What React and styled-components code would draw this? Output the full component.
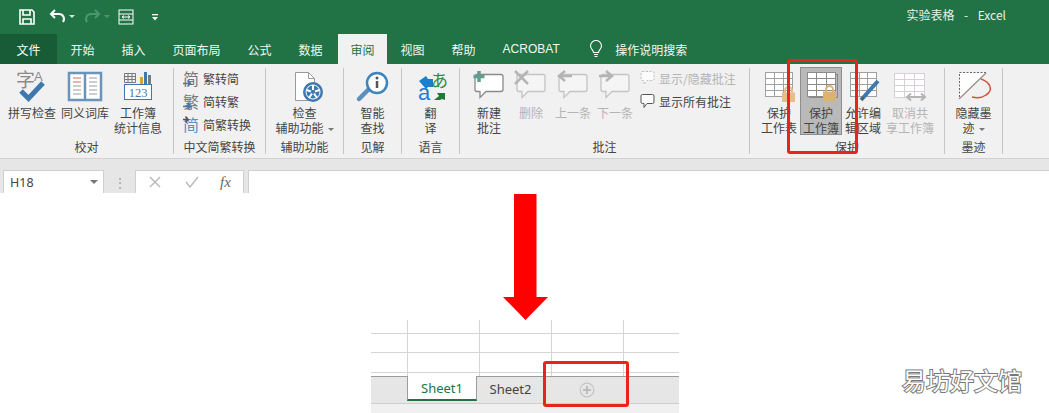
import React from 'react';
import styled, { createGlobalStyle } from 'styled-components';

const GlobalStyle = createGlobalStyle`
  html, body { margin: 0; padding: 0; background: #fff; }
  body { font-family: "Noto Sans CJK SC", "Noto Sans", sans-serif; }
`;

const Page = styled.div`
  position: relative;
  width: 1049px;
  height: 413px;
  overflow: hidden;
  background: #fff;
`;

const TitleBar = styled.div`
  display: flex;
  align-items: center;
  height: 34px;
  background: #217346;
  padding-left: 18px;
  box-sizing: border-box;
`;

const QuickIcons = styled.div`
  display: flex;
  align-items: center;
`;

const Spacer = styled.span`
  flex: none;
  width: ${p => p.$w}px;
`;

const WindowTitle = styled.div`
  display: flex;
  gap: 9.5px;
  margin-left: auto;
  margin-right: 43px;
  margin-top: -5px;
  color: #e6f0ea;
  font-size: 12px;
  white-space: nowrap;
`;

const TabRow = styled.div`
  display: flex;
  align-items: stretch;
  height: 30px;
  background: #217346;
`;

const FileTab = styled.div`
  display: flex;
  align-items: center;
  justify-content: center;
  width: 57px;
  background: #185c37;
  color: #fff;
  font-size: 12px;
`;

const Tab = styled.div`
  display: flex;
  align-items: center;
  padding: 0 13.5px;
  color: ${p => (p.$active ? '#217346' : '#f2f7f4')};
  background: ${p => (p.$active ? '#f1f1f1' : 'transparent')};
  font-size: 12px;
  ${p => p.$active && 'width: 49px; box-sizing: border-box; padding: 0; justify-content: center; margin-left: 2px;'}
`;

const LatinTab = styled(Tab)`
  font-family: "Liberation Sans", sans-serif;
  font-size: 12px;
`;

const SearchTab = styled.div`
  display: flex;
  align-items: center;
  gap: 12px;
  margin-left: 16px;
  color: #f2f7f4;
  font-size: 12px;
`;

const Ribbon = styled.div`
  display: flex;
  height: 95px;
  padding-top: 4px;
  box-sizing: border-box;
  background: #f1f1f1;
  border-bottom: 1px solid #d2d2d2;
`;

const Group = styled.section`
  display: flex;
  flex-direction: column;
  width: ${p => p.$width}px;
  height: 86px;
  box-sizing: border-box;
  border-right: 1px solid #c6c6c6;
`;

const GroupBody = styled.div`
  display: flex;
  justify-content: ${p => (p.$start ? 'flex-start' : 'center')};
  padding-left: ${p => p.$left || 0}px;
  gap: ${p => p.$gap || 0}px;
  height: 71px;
`;

const GroupLabel = styled.div`
  height: 15px;
  line-height: 15px;
  text-align: center;
  font-size: 12px;
  color: #444;
`;

const RibbonButton = styled.div`
  display: flex;
  flex-direction: column;
  align-items: center;
  flex: none;
  width: ${p => p.$width || 42}px;
  height: 68px;
  margin-top: ${p => (p.$selected ? '-1px' : '0')};
  margin-left: ${p => p.$offset || 0}px;
  padding-top: ${p => (p.$selected ? '1px' : '0')};
  box-sizing: border-box;
  font-size: 12px;
  line-height: 15px;
  text-align: center;
  color: ${p => (p.$disabled ? '#b4b4b4' : '#444')};
  background: ${p => (p.$selected ? '#b9b9b9' : 'transparent')};
  box-shadow: ${p => (p.$selected ? 'inset 0 0 0 1px #8e8e8e' : 'none')};
  white-space: nowrap;

  svg { flex: none; display: block; margin-bottom: 0.5px; overflow: visible; }
`;

const Caret = styled.span`
  display: inline-block;
  width: 0;
  height: 0;
  margin-left: 4px;
  vertical-align: 2px;
  border-left: 3px solid transparent;
  border-right: 3px solid transparent;
  border-top: 3px solid #777;
`;

const SmallStack = styled.div`
  display: flex;
  flex-direction: column;
  gap: ${p => p.$gap}px;
  margin-left: ${p => p.$left || 0}px;
`;

const SmallItem = styled.div`
  display: flex;
  align-items: center;
  gap: ${p => p.$gap || 3}px;
  height: 20px;
  font-size: 12px;
  white-space: nowrap;
  color: ${p => (p.$disabled ? '#b4b4b4' : '#444')};
`;

const ConvertGlyph = styled.span`
  position: relative;
  display: block;
  flex: none;
  width: 17px;
  height: 20px;
  font-size: 16px;
  line-height: 20px;
  color: ${p => p.$color};

  svg { position: absolute; left: 0; top: 0; }
`;

const FormulaBar = styled.div`
  display: flex;
  align-items: flex-end;
  height: 34px;
  background: #e6e6e6;
`;

const NameBox = styled.div`
  display: flex;
  align-items: center;
  justify-content: space-between;
  width: 101px;
  height: 23px;
  margin-left: 3px;
  padding: 0 5px 0 6px;
  box-sizing: border-box;
  background: #fff;
  border: 1px solid #cfcfcf;
  border-bottom: none;
  font-family: "Noto Sans", sans-serif;
  font-size: 12.5px;
  color: #444;
`;

const NameCaret = styled.span`
  width: 0;
  height: 0;
  border-left: 4px solid transparent;
  border-right: 4px solid transparent;
  border-top: 4px solid #777;
`;

const BarDots = styled.div`
  display: flex;
  align-items: center;
  justify-content: center;
  width: 31px;
  height: 23px;
  color: #a0a0a0;
  font-size: 12px;
  line-height: 1;
`;

const FormulaButtons = styled.div`
  display: flex;
  align-items: center;
  width: 109px;
  height: 23px;
  padding-left: 13px;
  gap: 24px;
  box-sizing: border-box;
  background: #fff;
  border: 1px solid #cfcfcf;
  border-bottom: none;
`;

const FxLabel = styled.span`
  font-family: "Liberation Serif", serif;
  font-style: italic;
  font-size: 15px;
  color: #666;
  margin-left: -3px;
`;

const FormulaInput = styled.div`
  flex: 1;
  height: 23px;
  margin-left: 4px;
  box-sizing: border-box;
  background: #fff;
  border: 1px solid #cfcfcf;
  border-bottom: none;
  border-right: none;
`;

const Canvas = styled.div`
  display: flex;
  flex-direction: column;
`;

const BigArrow = styled.svg`
  display: block;
  margin: 1px 0 0 503px;
`;

const SheetClip = styled.div`
  display: flex;
  flex-direction: column;
  width: 308px;
  margin-left: 371px;
  background: #fff;
`;

const CellGrid = styled.div`
  display: grid;
  grid-template-columns: 37px 72px 72px 72px 55px;
  grid-template-rows: 14px 19px 20px 3px;
`;

const Cell = styled.div`
  box-sizing: border-box;
  border-right: ${p => (p.$lastCol ? 'none' : '1px solid #d4d4d4')};
  border-bottom: ${p => (p.$lastRow ? 'none' : '1px solid #d4d4d4')};
`;

const SheetBar = styled.div`
  display: flex;
  align-items: flex-start;
  height: 28px;
  padding-left: 36px;
  box-sizing: border-box;
  background: #e6e6e6;
  border-top: 1px solid #9c9c9c;
  border-bottom: 1px solid #cfcfcf;
  font-family: "Noto Sans", sans-serif;
  font-size: 13px;
`;

const SheetTab = styled.div`
  display: flex;
  align-items: center;
  justify-content: center;
  box-sizing: border-box;
  width: ${p => (p.$active ? 70 : 67)}px;
  height: 25px;
  margin-top: -1px;
  color: ${p => (p.$active ? '#217346' : '#444')};
  background: ${p => (p.$active ? '#fff' : 'transparent')};
  border-left: ${p => (p.$active ? '1px solid #9c9c9c' : 'none')};
  border-right: ${p => (p.$active ? '1px solid #9c9c9c' : 'none')};
  border-bottom: ${p => (p.$active ? '2px solid #217346' : 'none')};
`;

const AddSheet = styled.svg`
  margin: 5px 0 0 35px;
`;

const SheetFoot = styled.div`
  height: 9px;
  background: #f0f0f0;
`;

const RedBox = styled.div`
  position: absolute;
  left: ${p => p.$x}px;
  top: ${p => p.$y}px;
  width: ${p => p.$w}px;
  height: ${p => p.$h}px;
  box-sizing: border-box;
  border: 3px solid #e8241c;
  border-radius: 3px;
`;

const Watermark = styled.div`
  position: absolute;
  left: 902px;
  top: 362px;
  font-size: 24px;
  line-height: 36px;
  color: #fff;
  -webkit-text-stroke: 2px #777;
  paint-order: stroke fill;
  white-space: nowrap;
`;

const UndoSvg = styled.svg`
  display: block;
  transform: ${p => (p.$flip ? 'scaleX(-1)' : 'none')};
`;

const BLUE = '#3f78ad';

const SaveIcon = () => (
  <svg width="18" height="18" viewBox="0 0 18 18" fill="none" stroke="#fff" strokeWidth="1.6">
    <path d="M2 2h12l2 2v12H2z" />
    <path d="M5 2v5h7V2M5 16v-5h8v5" />
  </svg>
);

const UndoIcon = ({ color, flip }) => (
  <UndoSvg $flip={flip} width="18" height="16" viewBox="0 0 18 16" fill="none" stroke={color} strokeWidth="2">
    <path d="M6 1 2 5l4 4" />
    <path d="M2 5h8a5 5 0 0 1 4 8" />
  </UndoSvg>
);

const TinyCaret = ({ color }) => (
  <svg width="6" height="4" viewBox="0 0 6 4"><path d="M0 0h6L3 3z" fill={color} /></svg>
);

const FormIcon = () => (
  <svg width="16" height="16" viewBox="0 0 16 16" fill="none" stroke="#fff" strokeWidth="1">
    <rect x="1" y="1" width="14" height="14" />
    <path d="M1 5h14M1 11h14M5 8h6M4 8l2-1.500M4 8l2 1.500M12 8l-2-1.500M12 8l-2 1.500" />
  </svg>
);

const CustomizeIcon = () => (
  <svg width="6" height="7" viewBox="0 0 6 7" fill="#fff">
    <rect x="0" y="0" width="6" height="1.300" />
    <path d="M0 3h6L3 6.500z" />
  </svg>
);

const BulbIcon = () => (
  <svg width="14" height="18" viewBox="0 0 14 18" fill="none" stroke="#fff" strokeWidth="1.100">
    <path d="M4.500 12.500C4.500 10 1.500 9 1.500 6a5.500 5.500 0 0 1 11 0c0 3-3 4-3 6.500z" />
    <path d="M5 14.500h4M5.500 16.500h3" />
  </svg>
);

const SpellIcon = () => (
  <svg width="48" height="36" viewBox="0 0 48 36">
    <text x="8" y="19" fontSize="19" fill="#8b8b8b" fontFamily="Noto Sans CJK SC">字</text>
    <text x="26" y="13" fontSize="13" fill="#8b8b8b" fontFamily="Liberation Sans">A</text>
    <path d="M13 23l7.500 7.500L35 15" fill="none" stroke={BLUE} strokeWidth="5" />
  </svg>
);

const BookIcon = () => (
  <svg width="48" height="36" viewBox="0 0 48 36">
    <path d="M8 5h16v27H8zM24 5h16v27H24z" fill="#fff" stroke="#6d93b8" strokeWidth="2.500" />
    <path d="M12 10h8M12 14h8" stroke="#d06a5a" strokeWidth="1" />
    <path d="M12 18h8M12 22h8M12 26h8M28 10h8M28 14h8M28 18h8M28 22h8M28 26h8" stroke="#9a9a9a" strokeWidth="1" />
  </svg>
);

const StatsIcon = () => (
  <svg width="48" height="36" viewBox="0 0 48 36">
    <path d="M10.500 5.500h11v9h-11zM10.500 8.500h11M10.500 11.500h11M14 5.500v9M18 5.500v9" fill="none" stroke="#7a7a7a" strokeWidth="1" />
    <rect x="26" y="9" width="3" height="7" fill="#e0a030" />
    <rect x="30" y="4" width="3" height="12" fill="#3f78ad" />
    <rect x="34" y="7" width="3" height="9" fill="#7a7a7a" />
    <rect x="10.500" y="16.500" width="27" height="15" fill="#fff" stroke="#3f78ad" />
    <text x="24" y="29" fontSize="12.500" fill="#3f78ad" textAnchor="middle" fontFamily="Liberation Serif">123</text>
  </svg>
);

const ConvertIcon = ({ glyph, arrow }) => (
  <ConvertGlyph $color={arrow === 'top' ? '#5b8fc0' : '#777'}>
    {glyph}
    <svg width="17" height="20" viewBox="0 0 17 20" fill="none">
      {arrow === 'bottom' && <path d="M0 15.500h7M4.500 12.500l3 3-3 3" stroke={BLUE} strokeWidth="1.600" />}
      {arrow === 'top' && <path d="M0 5.500h4M2.500 2.500l2.500 3-2.500 3" stroke="#555" strokeWidth="1.600" />}
    </svg>
  </ConvertGlyph>
);

const CheckAccessIcon = () => (
  <svg width="72" height="36" viewBox="0 0 72 36">
    <path d="M26.500 4.500h13l6 6v22h-19z" fill="#fff" stroke="#9a9a9a" />
    <path d="M39.500 4.500v6h6" fill="none" stroke="#9a9a9a" />
    <circle cx="44" cy="24" r="10" fill="#3f78ad" />
    <path d="M44 17v5M37.500 22l4.500 1.500M50.500 22l-4.500 1.500M40 30l3-4.500M48 30l-3-4.500" stroke="#fff" strokeWidth="2" />
    <circle cx="44" cy="24" r="7" fill="none" stroke="#fff" strokeWidth="1" />
  </svg>
);

const LookupIcon = () => (
  <svg width="42" height="36" viewBox="0 0 42 36">
    <path d="M7 31l11-11" stroke="#5b8fc0" strokeWidth="4.500" strokeLinecap="round" />
    <circle cx="25" cy="15" r="10" fill="#fff" stroke="#3f84bd" strokeWidth="2.500" />
    <circle cx="25" cy="10" r="1.500" fill="#555" />
    <path d="M25 13v7" stroke="#555" strokeWidth="2.500" />
  </svg>
);

const TranslateIcon = () => (
  <svg width="42" height="36" viewBox="0 0 42 36">
    <path d="M9 13l7-5 2 3h5v8h-5l-2 2z" fill="#1b7fd0" />
    <text x="21" y="19" fontSize="17" fill="#2f8a3a" fontFamily="Noto Sans CJK SC">あ</text>
    <text x="8" y="32" fontSize="22" fill="#1b7fd0" fontFamily="Liberation Sans">a</text>
    <path d="M35 32l-3-1-2 1h-6l5-4-2-3h8z" fill="#1f7a35" />
  </svg>
);

const BUBBLE = 'M9 6.500h24a2 2 0 0 1 2 2v13a2 2 0 0 1-2 2H18l-6 6v-6H9a2 2 0 0 1-2-2v-13a2 2 0 0 1 2-2z';

const NewCommentIcon = () => (
  <svg width="42" height="36" viewBox="0 0 42 36">
    <path d={BUBBLE} fill="#fff" stroke="#8a8a8a" strokeWidth="1.300" />
    <path d="M11 3v11M5.500 8.500h11" stroke="#5f9e90" strokeWidth="3.500" />
  </svg>
);

const DeleteCommentIcon = () => (
  <svg width="42" height="36" viewBox="0 0 42 36">
    <path d={BUBBLE} fill="#f5f5f5" stroke="#c4c4c4" strokeWidth="1.300" />
    <path d="M5 3l13 13M18 3L5 16" stroke="#b4b4b4" strokeWidth="2.500" />
  </svg>
);

const PrevCommentIcon = ({ right }) => (
  <svg width="42" height="36" viewBox="0 0 42 36">
    <path d={BUBBLE} fill="#f5f5f5" stroke="#c4c4c4" strokeWidth="1.300" />
    {right
      ? <path d="M5 8h13M12 3l6 5-6 5" fill="none" stroke="#b4b4b4" strokeWidth="2.500" />
      : <path d="M20 8H7M13 3L7 8l6 5" fill="none" stroke="#b4b4b4" strokeWidth="2.500" />}
  </svg>
);

const SmallBubble = ({ color, dashed }) => (
  <svg width="15" height="16" viewBox="0 0 15 16">
    <path
      d="M2.500 1.500h10a1.500 1.500 0 0 1 1.500 1.500v6a1.500 1.500 0 0 1-1.500 1.500H7l-3 4v-4H2.500A1.500 1.500 0 0 1 1 9V3a1.500 1.500 0 0 1 1.500-1.500z"
      fill="#fbfbfb"
      stroke={color}
      strokeDasharray={dashed ? '2 1.500' : undefined}
    />
  </svg>
);

const SheetLines = ({ x, y, w, h, color }) => {
  const rows = [1, 2, 3].map(i => y + Math.round((h * i) / 4));
  const cols = [1, 2].map(i => x + Math.round((w * i) / 3));
  return (
    <g fill="none" stroke={color} strokeWidth="1">
      <rect x={x} y={y} width={w} height={h} fill="#fff" />
      {rows.map(r => <path key={r} d={`M${x} ${r}h${w}`} />)}
      {cols.map(c => <path key={c} d={`M${c} ${y}v${h}`} />)}
    </g>
  );
};

const Lock = ({ x, y, body }) => (
  <g transform={`translate(${x} ${y})`}>
    <path d="M3 7V4.500a3.500 3.500 0 0 1 7 0V7" fill="none" stroke={body} strokeWidth="2" />
    <rect x="0" y="6.500" width="13" height="9.500" fill={body} />
  </g>
);

const ProtectSheetIcon = () => (
  <svg width="42" height="36" viewBox="0 0 42 36">
    <SheetLines x={7.5} y={4.5} w={27} h={24} color="#a0a0a0" />
    <Lock x={24} y={18} body="#e9bd85" />
  </svg>
);

const ProtectBookIcon = () => (
  <svg width="42" height="36" viewBox="0 0 42 36">
    <rect x="9.500" y="6.500" width="28" height="23" fill="none" stroke="#888" strokeWidth="1" />
    <SheetLines x={7.5} y={4.5} w={28} h={24} color="#8a8a8a" />
    <Lock x={23} y={17} body="#dcb274" />
  </svg>
);

const AllowEditIcon = () => (
  <svg width="42" height="36" viewBox="0 0 42 36">
    <SheetLines x={8.5} y={4.5} w={26} h={24} color="#a0a0a0" />
    <path d="M19 32l17-19" stroke="#3f78ad" strokeWidth="4" />
    <path d="M19 32l1.500-3.500 2 2z" fill="#555" />
  </svg>
);

const UnshareIcon = () => (
  <svg width="48" height="36" viewBox="0 0 48 36">
    <SheetLines x={8.5} y={5.5} w={30} h={24} color="#d6d0d8" />
    <path d="M21 29h18M25 25.500 21 29l4 3.500M35 25.500l4 3.500-4 3.500" fill="none" stroke="#b4b4b4" strokeWidth="2" />
  </svg>
);

const InkIcon = () => (
  <svg width="48" height="36" viewBox="0 0 48 36">
    <path d="M9.500 4.500h27L9.500 31z" fill="#fff" />
    <path d="M36 4.500H9.500V30" fill="none" stroke="#666" strokeDasharray="2 1.500" />
    <path d="M9 31 36 5" stroke="#9a8a85" strokeWidth="1.200" />
    <path d="M31 11c9 3 13 11 5 16-4 3-10 3-14 2" fill="none" stroke="#d0553f" strokeWidth="1.500" />
  </svg>
);

const CellRows = () => {
  const cells = [];
  for (let r = 0; r < 4; r++) {
    for (let c = 0; c < 5; c++) {
      cells.push(<Cell key={`${r}-${c}`} $lastCol={c === 4} $lastRow={r === 3} />);
    }
  }
  return cells;
};

export default function App() {
  return (
    <Page>
      <GlobalStyle />
      <TitleBar>
        <QuickIcons>
          <SaveIcon />
          <Spacer $w={13} />
          <UndoIcon color="#fff" />
          <Spacer $w={2} />
          <TinyCaret color="#d6e5dc" />
          <Spacer $w={8} />
          <UndoIcon color="#4f9470" flip />
          <Spacer $w={3} />
          <TinyCaret color="#4f9470" />
          <Spacer $w={8} />
          <FormIcon />
          <Spacer $w={18} />
          <CustomizeIcon />
        </QuickIcons>
        <WindowTitle>
          <span>实验表格</span>
          <span>-</span>
          <span>Excel</span>
        </WindowTitle>
      </TitleBar>

      <TabRow>
        <FileTab>文件</FileTab>
        <Tab>开始</Tab>
        <Tab>插入</Tab>
        <Tab>页面布局</Tab>
        <Tab>公式</Tab>
        <Tab>数据</Tab>
        <Tab $active>审阅</Tab>
        <Tab>视图</Tab>
        <Tab>帮助</Tab>
        <LatinTab>ACROBAT</LatinTab>
        <SearchTab>
          <BulbIcon />
          操作说明搜索
        </SearchTab>
      </TabRow>

      <Ribbon>
        <Group $width={174}>
          <GroupBody $start $left={8} $gap={5}>
            <RibbonButton $width={48}><SpellIcon />拼写检查</RibbonButton>
            <RibbonButton $width={48}><BookIcon />同义词库</RibbonButton>
            <RibbonButton $width={48}><StatsIcon />工作簿<br />统计信息</RibbonButton>
          </GroupBody>
          <GroupLabel>校对</GroupLabel>
        </Group>

        <Group $width={92}>
          <GroupBody $start>
            <SmallStack $gap={3} $left={9}>
              <SmallItem><ConvertIcon glyph="简" arrow="bottom" />繁转简</SmallItem>
              <SmallItem><ConvertIcon glyph="繁" arrow="bottom" />简转繁</SmallItem>
              <SmallItem><ConvertIcon glyph="简" arrow="top" />简繁转换</SmallItem>
            </SmallStack>
          </GroupBody>
          <GroupLabel>中文简繁转换</GroupLabel>
        </Group>

        <Group $width={78}>
          <GroupBody>
            <RibbonButton $width={72}><CheckAccessIcon />检查<br /><span>辅助功能<Caret /></span></RibbonButton>
          </GroupBody>
          <GroupLabel>辅助功能</GroupLabel>
        </Group>

        <Group $width={58}>
          <GroupBody>
            <RibbonButton><LookupIcon />智能<br />查找</RibbonButton>
          </GroupBody>
          <GroupLabel>见解</GroupLabel>
        </Group>

        <Group $width={58}>
          <GroupBody>
            <RibbonButton><TranslateIcon />翻<br />译</RibbonButton>
          </GroupBody>
          <GroupLabel>语言</GroupLabel>
        </Group>

        <Group $width={290}>
          <GroupBody $start $left={8}>
            <RibbonButton><NewCommentIcon />新建<br />批注</RibbonButton>
            <RibbonButton $disabled><DeleteCommentIcon />删除</RibbonButton>
            <RibbonButton $disabled><PrevCommentIcon />上一条</RibbonButton>
            <RibbonButton $disabled><PrevCommentIcon right />下一条</RibbonButton>
            <SmallStack $gap={3} $left={4}>
              <SmallItem $disabled $gap={4}><SmallBubble color="#bdbdbd" dashed />显示/隐藏批注</SmallItem>
              <SmallItem $gap={4}><SmallBubble color="#555" />显示所有批注</SmallItem>
            </SmallStack>
          </GroupBody>
          <GroupLabel>批注</GroupLabel>
        </Group>

        <Group $width={195}>
          <GroupBody $start $left={8}>
            <RibbonButton><ProtectSheetIcon />保护<br />工作表</RibbonButton>
            <RibbonButton $selected><ProtectBookIcon />保护<br />工作簿</RibbonButton>
            <RibbonButton><AllowEditIcon />允许编<br />辑区域</RibbonButton>
            <RibbonButton $width={48} $offset={2} $disabled><UnshareIcon />取消共<br />享工作簿</RibbonButton>
          </GroupBody>
          <GroupLabel>保护</GroupLabel>
        </Group>

        <Group $width={58}>
          <GroupBody>
            <RibbonButton $width={48}><InkIcon />隐藏墨<br /><span>迹<Caret /></span></RibbonButton>
          </GroupBody>
          <GroupLabel>墨迹</GroupLabel>
        </Group>
      </Ribbon>

      <FormulaBar>
        <NameBox>H18<NameCaret /></NameBox>
        <BarDots>⋮</BarDots>
        <FormulaButtons>
          <svg width="12" height="12" viewBox="0 0 12 12"><path d="M1 1l10 10M11 1 1 11" stroke="#bcbcbc" strokeWidth="1.500" /></svg>
          <svg width="14" height="12" viewBox="0 0 14 12"><path d="M1 6l4 5 8-10" fill="none" stroke="#bcbcbc" strokeWidth="1.500" /></svg>
          <FxLabel>fx</FxLabel>
        </FormulaButtons>
        <FormulaInput />
      </FormulaBar>

      <Canvas>
        <BigArrow width="45" height="126" viewBox="0 0 45 126">
          <path d="M11 0h22.500v103H45L22.500 126 0 103h11z" fill="#fe0000" />
        </BigArrow>
        <SheetClip>
          <CellGrid><CellRows /></CellGrid>
          <SheetBar>
            <SheetTab $active>Sheet1</SheetTab>
            <SheetTab>Sheet2</SheetTab>
            <AddSheet width="16" height="16" viewBox="0 0 16 16">
              <circle cx="8" cy="8" r="6.800" fill="none" stroke="#c4c4c4" strokeWidth="1.200" />
              <path d="M8 4v8M4 8h8" stroke="#bdbdbd" strokeWidth="2" />
            </AddSheet>
          </SheetBar>
          <SheetFoot />
        </SheetClip>
      </Canvas>

      <RedBox $x={787} $y={59} $w={71} $h={95} />
      <RedBox $x={543} $y={361} $w={86} $h={46} />
      <Watermark>易坊好文馆</Watermark>
    </Page>
  );
}
